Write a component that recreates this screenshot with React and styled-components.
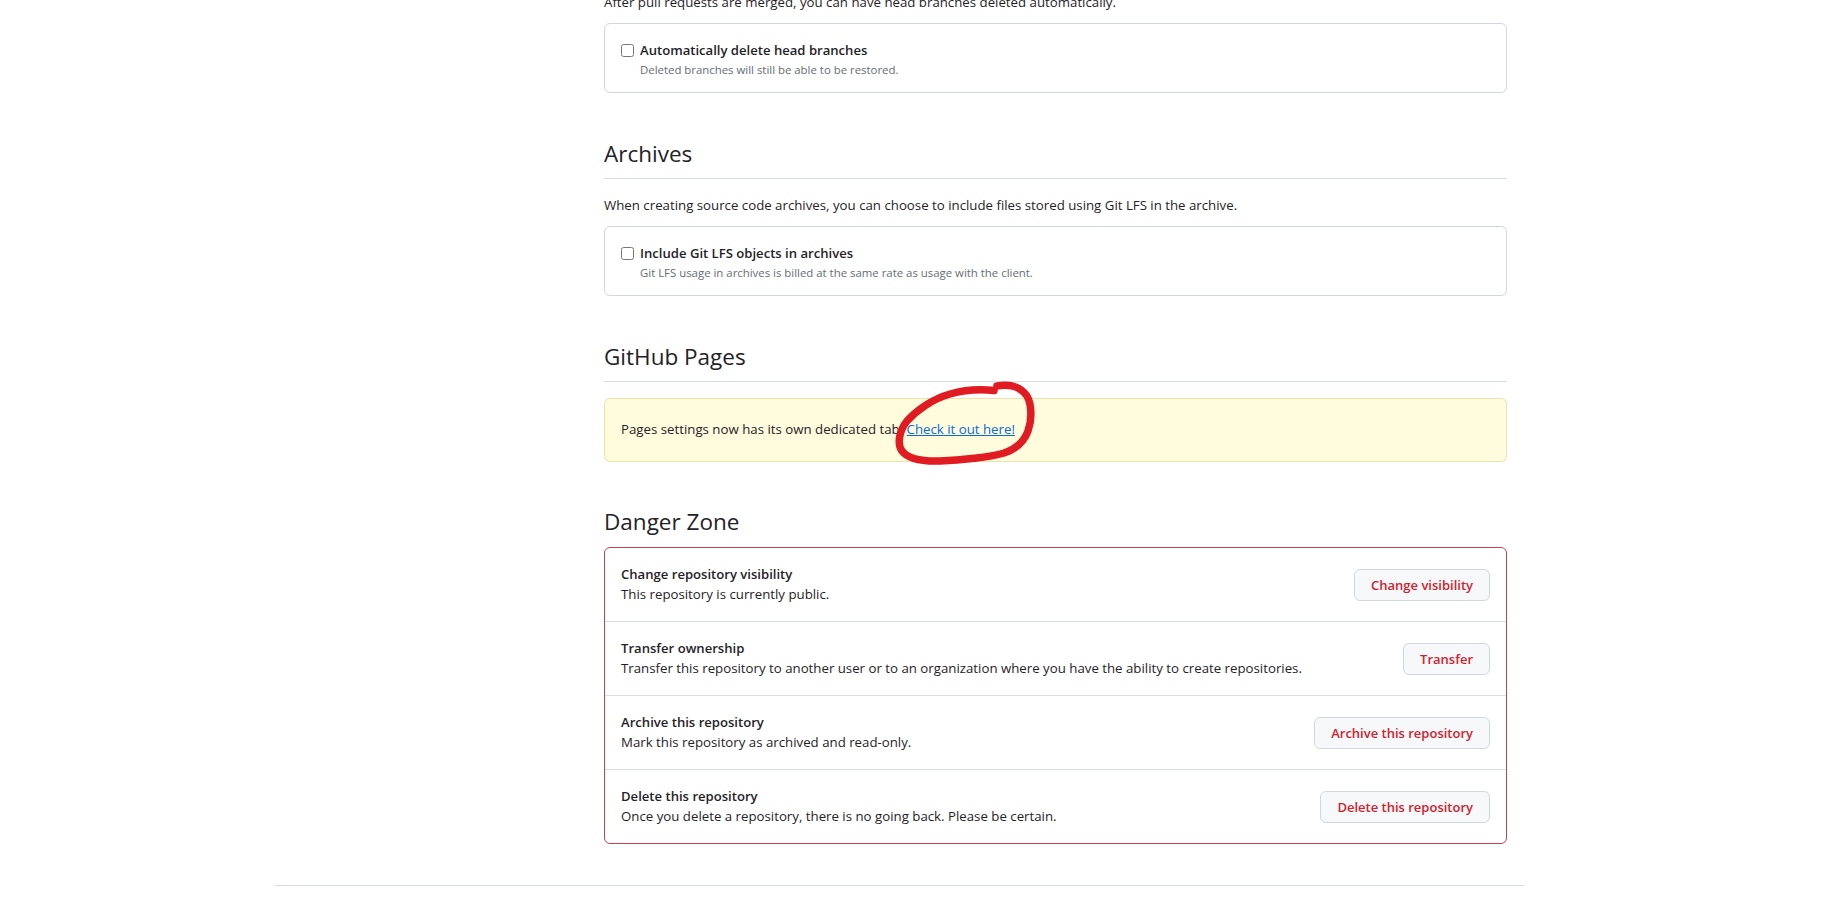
import React from 'react';
import styled, { createGlobalStyle } from 'styled-components';

const GlobalStyle = createGlobalStyle`
    body {
        margin: 0;
        background: #ffffff;
        color: #1f2328;
        font-family: "Open Sans", "Noto Sans", sans-serif;
        font-size: 13.25px;
    }
`;

const dangerRows = [
    {
        title: 'Change repository visibility',
        text: 'This repository is currently public.',
        action: 'Change visibility',
    },
    {
        title: 'Transfer ownership',
        text: 'Transfer this repository to another user or to an organization where you have the ability to create repositories.',
        action: 'Transfer',
    },
    {
        title: 'Archive this repository',
        text: 'Mark this repository as archived and read-only.',
        action: 'Archive this repository',
    },
    {
        title: 'Delete this repository',
        text: 'Once you delete a repository, there is no going back. Please be certain.',
        action: 'Delete this repository',
    },
];

const CheckOption = ({ label, hint }) => (
    <OptionBox>
        <CheckRow>
            <Checkbox type="checkbox" />
            <div>
                <OptionLabel>{label}</OptionLabel>
                <OptionHint>{hint}</OptionHint>
            </div>
        </CheckRow>
    </OptionBox>
);

// hand-drawn red loop someone scribbled over the screenshot
const Scribble = () => (
    <ScribbleSvg viewBox="890 375 150 95" width="150" height="95">
        <path
            d="M997 386 C1010 384, 1021 387, 1027 396 C1032 405, 1032 420, 1028 431 C1024 442, 1016 449, 1004 453 C990 457, 961 460.5, 940 461 C924 461.5, 908 459, 902 451 C897 444, 899 431, 907 421 C916 411, 932 399, 950 394 C964 390, 980 389, 994 390.5"
            fill="none"
            stroke="#e01b22"
            strokeWidth="7.5"
            strokeLinecap="round"
            strokeLinejoin="round"
        />
    </ScribbleSvg>
);

const App = () => {
    return (
        <Page>
            <GlobalStyle />
            <Container>
                <SettingsLayout>
                    <SideColumn />
                    <Main>
                        <Description>
                            After pull requests are merged, you can have head branches deleted automatically.
                        </Description>
                        <CheckOption
                            label="Automatically delete head branches"
                            hint="Deleted branches will still be able to be restored."
                        />

                        <Subhead>
                            <SubheadTitle>Archives</SubheadTitle>
                        </Subhead>
                        <Description>
                            When creating source code archives, you can choose to include files stored using Git LFS in the archive.
                        </Description>
                        <CheckOption
                            label="Include Git LFS objects in archives"
                            hint="Git LFS usage in archives is billed at the same rate as usage with the client."
                        />

                        <Subhead>
                            <SubheadTitle>GitHub Pages</SubheadTitle>
                        </Subhead>
                        <Flash>
                            Pages settings now has its own dedicated tab. <FlashLink href="#">Check it out here!</FlashLink>
                            <Scribble />
                        </Flash>

                        <Subhead $danger>
                            <SubheadTitle>Danger Zone</SubheadTitle>
                        </Subhead>
                        <DangerBox>
                            {dangerRows.map(row => (
                                <DangerRow key={row.title}>
                                    <div>
                                        <RowTitle>{row.title}</RowTitle>
                                        <RowText>{row.text}</RowText>
                                    </div>
                                    <DangerButton type="button">{row.action}</DangerButton>
                                </DangerRow>
                            ))}
                        </DangerBox>
                    </Main>
                </SettingsLayout>
                <Footer />
            </Container>
        </Page>
    );
};

const Page = styled.div`
    height: 918px;
    overflow: hidden;
`;

const Container = styled.div`
    margin-left: 275px;
    width: 1249px;
`;

const SettingsLayout = styled.div`
    display: grid;
    grid-template-columns: 313px 903px;
    column-gap: 16px;
`;

const SideColumn = styled.aside``;

const Main = styled.main`
    display: flex;
    flex-direction: column;
    margin-top: -8px;
`;

const Description = styled.p`
    margin: 0 0 10px;
    line-height: 21px;
    color: #1f2328;
`;

const OptionBox = styled.div`
    border: 1px solid #d0d7de;
    border-radius: 6px;
    padding: 16px 16px 13px;
`;

const CheckRow = styled.label`
    display: grid;
    grid-template-columns: 13px 1fr;
    column-gap: 6px;
    align-items: start;
`;

const Checkbox = styled.input`
    width: 13px;
    height: 13px;
    margin: 4px 0 0;
`;

const OptionLabel = styled.div`
    font-weight: 600;
    font-size: 13.1px;
    line-height: 20px;
`;

const OptionHint = styled.div`
    margin-top: 1px;
    font-size: 11.4px;
    line-height: 18px;
    color: #656d76;
`;

const Subhead = styled.div`
    margin: ${p => (p.$danger ? '42px 0 7px' : '43px 0 16px')};
    padding-bottom: ${p => (p.$danger ? '0' : '6px')};
    border-bottom: ${p => (p.$danger ? 'none' : '1px solid #d8dee4')};
`;

const SubheadTitle = styled.h2`
    margin: 0;
    font-size: 22.5px;
    font-weight: 400;
    line-height: 35px;
    padding-bottom: 1px;
    color: #1f2328;
`;

const Flash = styled.div`
    position: relative;
    padding: 20px 16px 21px;
    line-height: 21px;
    background: #fffbdd;
    border: 1px solid rgba(176, 136, 0, 0.22);
    border-radius: 6px;
`;

const FlashLink = styled.a`
    color: #0969da;
    text-decoration: underline;
`;

const ScribbleSvg = styled.svg`
    position: absolute;
    left: 285px;
    top: -24px;
    overflow: visible;
    pointer-events: none;
`;

const DangerBox = styled.div`
    border: 1px solid #c8414f;
    border-radius: 6px;
`;

const DangerRow = styled.div`
    display: flex;
    align-items: center;
    justify-content: space-between;
    gap: 16px;
    padding: 16px;
    & + & {
        border-top: 1px solid #d8dee4;
    }
`;

const RowTitle = styled.div`
    font-weight: 600;
    font-size: 13.1px;
    line-height: 20px;
`;

const RowText = styled.div`
    line-height: 21px;
`;

const DangerButton = styled.button`
    flex-shrink: 0;
    height: 32px;
    padding: 0 16px;
    font-family: inherit;
    font-size: 13px;
    font-weight: 600;
    color: #cf222e;
    background: #f6f8fa;
    border: 1px solid #d0d7de;
    border-radius: 6px;
    cursor: pointer;
`;

const Footer = styled.footer`
    margin-top: 41px;
    border-top: 1px solid #d8dee4;
`;

export default App;
